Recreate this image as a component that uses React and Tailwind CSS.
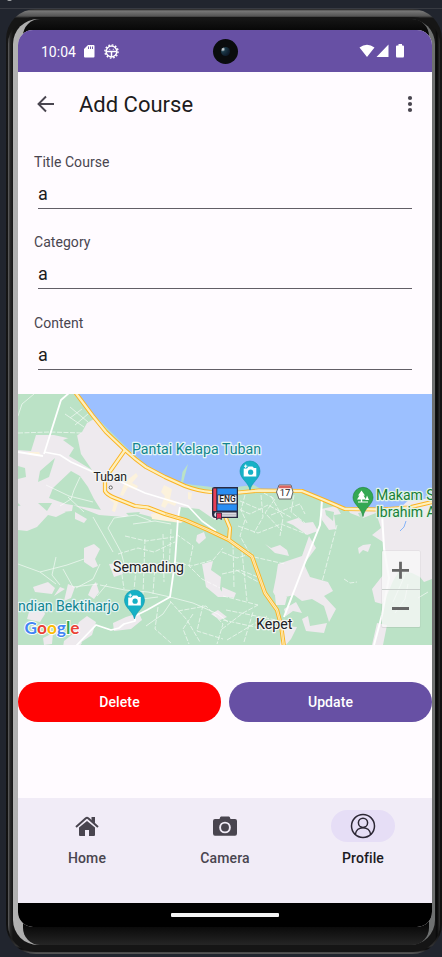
import React from "react";

const GREEN = "#bbe2c6";
const TOWN = "#eeeaee";

const yellowRoads = [
  "M57 -2 L75 22 L88 38 L107 56 Q118 66 128 73 L147 83 L167 92 Q180 97 193 98 L221 98.500 L241 96.500 L284 97 Q304 105 327 115 L364 115.500 L391 113.500 L414 108",
  "M107 56 L93 76 Q87 83 87 88 L87 97 Q89 101 97 104 L117 112 L130 113.500 L147 120 L167 126 L190 136 L211 146 L234 162.500 L247 199 L259 216 L263 231 L266 253",
  "M203 98 L207 122 L212 134 L211 146",
];

const whiteRoads = [
  ["M51 -1 L43 6 L26 60", 1.8],
  ["M0 58 L25 62", 1.8],
  ["M26 58 L42 61 L53 68 L73 77 L103 88 L127 99 L170 112 L184 127 L198 137", 1.6],
  ["M162 113 L160 124 L157 168 L152 203 L129 216 L117 222 L117 227 L106 230 L101 234 L93 236 L78 231 L58 252", 1.8],
  ["M304 106 L303 121 L302 131 L286 171 L266 223", 2],
  ["M364 119 L366 154 L371 184 L367 205 L364 221 L356 251", 2],
];

const laneRoads = [
  "M75 123 L95 158", "M82 191 L107 196 L130 198 L152 203 L175 209 L200 220 L210 228",
  "M107 173 L103 158 L90 134 L96 124 L118 121 L133 127", "M115 130 L137 127 L153 130",
  "M103 174 L106 195 M118 175 L116 196 M127 145 L125 200 M137 170 L135 200 M145 140 L146 188 M153 135 L151 175",
  "M100 160 L120 154 L136 158 L157 148", "M107 142 L128 147 L156 143",
  "M158 140 L175 152 L171 172 L184 185 L202 194", "M157 168 L173 172 L195 166 L205 154",
  "M152 207 L169 226 L182 248 M160 217 L188 212 L205 230 L199 250", "M140 213 L137 235 L153 249",
  "M175 220 L165 235 L171 250 M185 211 L179 237 L205 245", "M204 180 L222 176 L240 183",
  "M204 158 L219 164 L235 159 M215 149 L216 193 M224 158 L229 207 M205 202 L240 211 M208 216 L258 226 M205 226 L251 236",
  "M218 176 L244 190 M204 235 L225 219 L240 211 M209 246 L249 222 M226 248 L235 218",
  "M227 126 L222 142 L232 160 M236 163 L267 170", "M227 101 L223 116 L229 129 M243 101 L245 123 L236 139 M253 102 L265 124 L262 142 M276 101 L273 118 L287 129",
  "M216 113 L232 120 L250 111 L274 124 M220 132 L240 139 L263 130 L288 140", "M240 96 L257 105 L247 119 L264 137 M222 107 L243 116 M253 121 L282 110 L287 120",
  "M319 131 L304 188 M326 185 L332 189 L339 188",
  "M0 39 L32 38 L64 39", "M0 22 L4 10 L16 0 M52 13 L70 28 M47 20 L66 33 M64 15 L52 24 M70 20 L57 31",
  "M28 91 L51 102 L75 108 M62 83 L56 96 L53 105 L42 112 M50 103 L66 118",
  "M0 170 L22 178 L38 190 M38 163 L34 181 L42 191 M22 178 L49 171 L66 165", "M45 175 L55 193 L80 190 M58 194 L75 185 L82 170",
  "M375 208 L383 190 L388 178 M377 219 L387 205 L390 190 M400 204 L410 198",
  "M110 216 L124 205 L140 203 M89 190 L79 202 M128 232 L145 220 L153 208",
];

const cream = [
  "M107 88 l11 -9 2 3 -6 7 6 3 -2 4 -8 -3 -5 9 -3 -1z", "M146 91 l8 4 -2 10 7 3 -2 4 -7 -3 -3 5 -4 -2 4 -10 -4 -4z",
  "M170 98 l4 1 -1 7 -3 -1z", "M10 58 h11 l2 4 -12 -1z", "M93 101 l8 5 -4 12 -3 -1 2 -8 -5 -4z",
  "M133 120 l14 -2 20 8 -4 3 -29 -4z",
];

const townPatches = [
  "M0 56 L13 57 L18 41 L36 41 L54 45 L64 38 L69 29 L76 25 L107 55 L132 75 L167 92 L193 97 L205 119 L197 126 L181 115 L162 113 L159 125 L145 126 L119 119 L106 123 L81 121 L55 111 L54 117 L33 119 L20 110 L5 114 L0 109Z",
  "M0 112 L27 107 L48 118 L38 123 L30 121 L19 133 L9 137 L0 136Z",
  "M66 154 L76 150 L82 155 L77 165 L80 172 L75 174 L66 168Z M91 170 L101 169 L105 180 L96 183Z",
  "M74 192 L78 188 L81 198 L76 205 L70 201Z M50 190 L57 193 L53 204 L46 207Z M42 193 L47 195 L36 202Z",
  "M15 193 L30 188 L37 194 L34 200 L17 198Z M11 218 L24 210 L27 220 L22 228 L9 225Z",
  "M61 228 L69 222 L78 228 L74 241 L62 249 L55 242Z M95 229 L108 223 L121 219 L124 226 L113 235 L96 237Z",
  "M46 247 L56 239 L64 249 L61 253 L45 253Z M25 244 L35 239 L34 250 L26 251Z",
  "M179 141 L186 138 L188 144 L181 150 L178 147Z M184 170 L195 167 L193 176 L203 183 L202 195 L208 203 L200 203 L188 193Z",
  "M193 220 L200 216 L209 223 L202 226Z M204 193 L218 199 L216 204 L204 202Z",
  "M268 128 L280 124 L286 129 L295 128 L300 137 L289 141 L275 131Z M303 115 L318 112 L323 120 L316 121 L318 135 L311 136 L304 126Z",
  "M247 150 L253 154 L262 151 L269 156 L271 162 L257 159Z M260 170 L284 162 L291 142 L298 154 L286 170 L292 183 L310 188 L315 197 L306 202 L318 215 L311 228 L306 212 L294 205 L284 207 L276 201 L259 205 L255 198 L258 183Z",
  "M257 202 L269 203 L267 211 L258 211Z M266 215 L278 208 L284 219 L275 217 L268 222Z M284 225 L290 222 L292 232 L309 229 L306 239 L288 237Z M265 232 L279 233 L273 245 L267 252 L262 251Z",
  "M340 154 L345 151 L353 150 L350 158 L345 156 L341 160Z M358 119 L414 113 L414 185 L406 188 L402 183 L394 179 L381 177 L375 187 L369 201 L364 210 L357 208 L354 195 L365 181 L365 148 L354 141 L363 134Z",
  "M330 115 L414 110 L414 120 L358 119 L345 124 L332 119Z M359 229 L369 231 L365 251 L354 251Z",
  "M382 112 L390 106 L414 101 L414 116 L382 117Z",
  "M57 118 L69 125 L66 129 L57 125Z",
];

const innerGreen = [
  "M22 77 L37 64 L31 83 L20 88Z M45 46 L59 41 L63 60 L74 76 L61 68 L51 62 L56 54Z",
  "M53 77 L62 82 L70 93 L76 105 L83 116 L66 113 L48 110 L31 104 L35 94Z",
  "M0 72 L7 74 L8 83 L0 85Z M20 109 L34 109 L29 117Z M108 119 L122 118 L116 127Z",
  "M307 116 L316 118 L315 127 L308 121Z M340 119 L346 118 L344 127Z",
];

function CameraPin({ x, y }) {
  return (
    <g transform={`translate(${x} ${y})`}>
      <path d="M0 29 C-1.500 21 -10 18 -10 10 A10 10 0 0 1 10 10 C10 18 1.500 21 0 29Z" fill="#16b1c6" stroke="#0c94a9" strokeWidth=".6" />
      <path d="M-6.300 15.500 V7.500 H-3 L-1.500 5.500 H2.500 L4 7 H6.300 V15.500Z" fill="#fff" />
      <circle cx=".6" cy="11.200" r="2.600" fill="#16b1c6" />
      <path d="M-4.300 3.500 V7 M-6 5.200 H-2.600" stroke="#fff" />
    </g>
  );
}

function MapView() {
  return (
    <svg className="block h-[251px] w-[414px]" viewBox="0 0 414 251">
      <rect width="414" height="251" fill={GREEN} />
      {townPatches.map((d) => <path key={d} d={d} fill={TOWN} />)}
      {innerGreen.map((d) => <path key={d} d={d} fill={GREEN} />)}
      <path d="M60 0 H414 V103 L402 106 L392 105 L384 112 L364 114 L327 113 L300 102 L284 95.500 L243 95 L236 91 L222 92.500 L212 95 L198 94 L190 92.500 L176 91 L163 89 L150 83 L128 71 L110 55 L76 21Z" fill="#9cc0ff" />
      <path d="M163 88 L164.500 78 L170 70 L166.500 83 L165 89Z" fill={GREEN} />
      {cream.map((d) => <path key={d} d={d} fill="#fcf2dc" />)}
      <g fill="none" stroke="#fff" strokeLinejoin="round" opacity=".75">
        {laneRoads.map((d, i) => <path key={d} d={d} strokeWidth=".8" strokeDasharray={i > 3 && i < 21 ? "5 1.500" : undefined} />)}
      </g>
      <g fill="none" stroke="#fff" strokeLinejoin="round">
        {whiteRoads.map(([d, w]) => <path key={d} d={d} strokeWidth={w} />)}
      </g>
      <path d="M388 127 L386 133 L382 137" fill="none" stroke="#86b4f8" />
      <g fill="none" strokeLinejoin="round">
        {yellowRoads.map((d) => <path key={d} d={d} stroke="#fbb321" strokeWidth="4.200" />)}
        {yellowRoads.map((d) => <path key={d} d={d} stroke="#fef0bd" strokeWidth="2.300" />)}
      </g>
      <path d="M147 120 L167 126 L190 136 L211 146 L234 162.500 L247 199 L259 216 L263 231 L266 253" fill="none" stroke="#fbc65a" strokeWidth=".6" />

      <CameraPin x="232" y="67" />
      <CameraPin x="116.500" y="196" />

      <g transform="translate(345 93.500)">
        <path d="M0 29 C-1.500 20 -10 17 -10 9.800 A10 10 0 0 1 10 9.800 C10 17 1.500 20 0 29Z" fill="#34a853" stroke="#188038" strokeWidth=".6" />
        <path d="M-1.500 3 L2 8 H.5 L3 12 H-.8 V14 H5 V15 H-5 V14 H-2.200 V12 H-6 L-3.500 8 H-5Z M4 8 L6 12.500 H2.500Z" fill="#fff" />
      </g>

      <g transform="translate(267 98)">
        <path d="M-6 -7 H6 L8 0 L6 7 H-6 L-8.500 0Z" fill="#fff" stroke="#666" strokeWidth="1" />
        <path d="M-5.500 -6.500 H5.500 L6.500 -3.800 H-6.500Z" fill="#d96560" />
        <text x="0" y="4" textAnchor="middle" fontSize="9.500" fill="#222">17</text>
      </g>

      <circle cx="92.700" cy="93.500" r="1.600" fill="#fff" stroke="#555" strokeWidth=".9" />

      <g transform="translate(194 93)">
        <path d="M0 2 Q0 0 2.500 0 H26 V23 L26 31 H3 Q0 31 0 27Z" fill="#282a42" />
        <rect x="1.300" y="1.500" width="3" height="22.500" fill="#e84055" />
        <rect x="5.300" y="1.500" width="19.500" height="22" fill="#298df2" />
        <rect x="5.500" y="7.500" width="19.500" height="9.800" fill="#282a42" />
        <rect x="6.200" y="8.300" width="18.300" height="8.200" fill="#f4f3f7" />
        <text x="15.400" y="15.400" textAnchor="middle" fontSize="8.500" fontWeight="500" textLength="16.500" lengthAdjust="spacingAndGlyphs" fill="#222">ENG</text>
        <path d="M3 25.500 H24.500 V29.800 H3 Q1.500 27.500 3 25.500Z" fill="#dedee5" />
        <path d="M5 27.800 H24" stroke="#9c9ca6" strokeWidth=".7" />
        <path d="M4.500 26 H9.500 V32.500 L7 31 L4.500 32.500Z" fill="#e62e57" stroke="#282a42" strokeWidth=".8" />
      </g>

      <g strokeWidth="2.500" strokeLinejoin="round" paintOrder="stroke">
        <g fill="#12858f" stroke="#e5f5f6">
          <text x="114" y="60" fontSize="14.500" textLength="129" lengthAdjust="spacingAndGlyphs">Pantai Kelapa Tuban</text>
          <text x="0" y="217" fontSize="14.500" textLength="101" lengthAdjust="spacingAndGlyphs">ndian Bektiharjo</text>
        </g>
        <g fill="#188038" stroke="#e2f4e8" fontSize="14">
          <text x="358" y="106">Makam S</text>
          <text x="358" y="123">Ibrahim A</text>
        </g>
        <g fill="#202124" stroke="#f4f6f4">
          <text x="75.500" y="86.500" fontSize="13" textLength="33.500" lengthAdjust="spacingAndGlyphs">Tuban</text>
          <text x="95" y="178" fontSize="14.500" textLength="71" lengthAdjust="spacingAndGlyphs">Semanding</text>
          <text x="238" y="235" fontSize="14.500" textLength="36.500" lengthAdjust="spacingAndGlyphs">Kepet</text>
        </g>
      </g>

      <g fontSize="17.500" fontWeight="700" stroke="#fff" strokeWidth="1.800" paintOrder="stroke">
        <text x="6.500" y="240" textLength="55" lengthAdjust="spacingAndGlyphs" fontFamily="Lato, sans-serif">
          <tspan fill="#4285f4">G</tspan><tspan fill="#ea4335">o</tspan><tspan fill="#fbbc04">o</tspan><tspan fill="#4285f4">g</tspan><tspan fill="#34a853">l</tspan><tspan fill="#ea4335">e</tspan>
        </text>
      </g>

      <rect x="363.500" y="156.500" width="39" height="77.500" rx="1.500" fill="#777" opacity=".15" />
      <rect x="364" y="157" width="38" height="76" rx="1" fill="#fff" opacity=".74" />
      <path d="M364 195.500 H402" stroke="#c9cfcc" />
      <path d="M374 176.300 H391 M382.500 167.800 V184.800 M374 214.500 H391" stroke="#666" strokeWidth="2.800" />
    </svg>
  );
}

function StatusBar() {
  return (
    <div className="flex h-[42px] items-center bg-[#6750a4] pl-[23px] pr-[27px] text-white">
      <span className="w-[35px] whitespace-nowrap pt-px text-[14px] leading-none">10:04</span>
      <svg className="ml-[8px] h-[13px] w-[11px]" viewBox="0 0 11 13">
        <path d="M4 0 H9.500 Q10.500 0 10.500 1 V11.500 Q10.500 12.500 9.500 12.500 H1 Q0 12.500 0 11.500 V4Z" fill="#fff" />
        <path d="M4.500 1.500 V4 M6.500 1.500 V4 M8.500 1.500 V4" stroke="#6750a4" strokeWidth=".9" />
      </svg>
      <svg className="ml-[9px] h-[15px] w-[15px]" viewBox="0 0 15 15" fill="none" stroke="#fff">
        <circle cx="7.500" cy="7.500" r="5.400" strokeWidth="1.500" />
        <circle cx="7.500" cy="7.500" r="6.600" strokeWidth="1.400" strokeDasharray="1.700 1.756" />
        <path d="M2.500 7.500 H12.500 M7.500 7.500 V13" strokeWidth="1.500" />
        <path d="M5.200 5.300 H6.200 M8.800 5.300 H9.800" />
      </svg>
      <span className="ml-[94px] block h-[25px] w-[25px] shrink-0 rounded-full bg-[#0a0c0e] p-[8px]">
        <span className="block h-[9px] w-[9px] rounded-full bg-[radial-gradient(circle_at_20%_25%,#bdc7cd_0_8%,#1c3b4a_25%,#102030_65%,#08141f)]" />
      </span>
      <svg className="ml-auto h-[14px] w-[46px] shrink-0" viewBox="0 0 46 14" fill="#fff">
        <path d="M.5 3.500 Q8 -2 15.500 3.500 L8 13Z M29.500 .5 V13 H17.500Z M38 1.500 H39.500 V0 H43 V1.500 H44 Q45 1.500 45 2.500 V12 Q45 13.500 44 13.500 H38 Q37 13.500 37 12 V2.500 Q37 1.500 38 1.500Z" />
      </svg>
    </div>
  );
}

function Field({ label, className }) {
  return (
    <div className={className}>
      <div className="h-[21px] text-[14px] leading-[20px] tracking-[0.05px] text-[#49454f]">{label}</div>
      <div className="mx-1 h-[36px] border-b border-[#625e66] pt-[8px] text-[18px] leading-[25px] text-[#1d1b20]">a</div>
    </div>
  );
}

function NavItem({ label, active, children }) {
  return (
    <div className="flex flex-1 flex-col items-center pt-[12px]">
      <div className={active ? "flex h-[32px] w-[64px] items-center justify-center rounded-full bg-[#e6def6]" : "flex h-[32px] w-[64px] items-center justify-center"}>
        {children}
      </div>
      <div className={active ? "mt-[6px] text-[14px] font-medium leading-[20px] tracking-[0.1px] text-[#1c1b1f]" : "mt-[6px] text-[14px] font-medium leading-[20px] tracking-[0.15px] text-[#49454f]"}>{label}</div>
    </div>
  );
}

function NavBar() {
  return (
    <div className="flex h-[105px] bg-[#f1ecf7]">
      <NavItem label="Home">
        <svg className="h-[24px] w-[24px]" viewBox="0 0 24 24">
          <path d="M4 13.500 L12 7 L20 13.500 V21 Q20 22 19 22 H14 V16 H10 V22 H5 Q4 22 4 21Z" fill="#49454f" />
          <path d="M1 13 L10.800 4.300 Q12 3.300 13.200 4.300 L23 13" fill="none" stroke="#49454f" strokeWidth="2" />
          <path d="M16.500 3 H20 V9.500 L16.500 6.500Z" fill="#49454f" />
        </svg>
      </NavItem>
      <NavItem label="Camera">
        <svg className="h-[24px] w-[24px]" viewBox="0 0 24 24">
          <path d="M8 2.500 H16 Q17 2.500 17.500 5 H22 Q24 5 24 7 V19.500 Q24 21.800 22 21.800 H2 Q0 21.800 0 19.500 V7 Q0 5 2 5 H6.500 Q7 2.500 8 2.500Z" fill="#49454f" />
          <circle cx="12" cy="13.500" r="4.900" fill="none" stroke="#f1ecf7" strokeWidth="1.900" />
        </svg>
      </NavItem>
      <NavItem label="Profile" active>
        <svg className="h-[26px] w-[26px]" viewBox="0 0 26 26" fill="none" stroke="#2c2735" strokeWidth="1.500">
          <circle cx="13" cy="13" r="11.500" />
          <circle cx="13" cy="9.800" r="4.600" />
          <path d="M5.300 21.700 C6.300 12.300 19.700 12.300 20.700 21.700" />
        </svg>
      </NavItem>
    </div>
  );
}

export default function App() {
  return (
    <div className="h-[957px] w-[442px] overflow-hidden bg-[#21252e] font-['Roboto',sans-serif]">
      <div className="flex h-[9px] items-end border-b border-[#383b42]">
        <div className="mb-[7px] ml-[7px] h-[2px] w-[5px] rounded-b-full bg-[#a5a8aa]" />
      </div>
      <div className="ml-[6px] h-[945px] w-[436px] rounded-[30px] bg-[linear-gradient(to_bottom,#1b1b1b_0,#777_2px,#555_7px,#161616_9px,#111_925px,#333_937px,#090909_940px,#555_944px)] px-[2px] pb-[2px] pt-[8px]">
        <div className="h-[935px] rounded-[27px] bg-[linear-gradient(to_right,#666_0,#292929_2px,#151515_5px,#151515_427px,#080808_429px,#333_432px)] px-[5px] pt-[2px]">
          <div className="h-[926px] rounded-[25px] bg-[linear-gradient(to_right,#b2b2b2_0,#adadad_12px,#777_200px,#6e7070_100%)] pl-[10px] pr-[6px]">
            <div className="h-[926px] rounded-[17px] bg-[linear-gradient(to_bottom,#151515_0,#080808_11px,#080808_906px,#252525_926px)] pt-[11px]">
              <div className="ml-[-5px] h-[897px] w-[414px] overflow-hidden rounded-[15px] bg-[#fffbff]">
                <StatusBar />
                <div className="flex h-[64px] items-center pl-[19px] pr-[18px] text-[#1d1b20]">
                  <svg className="h-[18px] w-[18px]" viewBox="0 0 18 18" fill="none" stroke="#49454f" strokeWidth="1.900"><path d="M17 9 H2 M9 1.500 L1.500 9 L9 16.500" /></svg>
                  <h1 className="ml-[24px] pt-[2px] text-[22px] font-normal leading-[28px]">Add Course</h1>
                  <svg className="ml-auto h-[18px] w-[8px]" viewBox="0 0 8 18" fill="#49454f"><circle cx="4" cy="3" r="2.100" /><circle cx="4" cy="9" r="2.100" /><circle cx="4" cy="15" r="2.100" /></svg>
                </div>
                <div className="h-[258px] px-4 pt-[16px]">
                  <Field label="Title Course" className="h-[80px]" />
                  <Field label="Category" className="h-[81px]" />
                  <Field label="Content" className="h-[81px]" />
                </div>
                <MapView />
                <div className="flex h-[153px] gap-[8px] pt-[37px] text-[14px] font-medium text-white">
                  <button className="h-[40px] w-[203px] rounded-full bg-[#ff0000] tracking-[0.1px]">Delete</button>
                  <button className="h-[40px] w-[203px] rounded-full bg-[#6750a4] tracking-[0.1px]">Update</button>
                </div>
                <NavBar />
                <div className="flex h-[24px] justify-center bg-black pt-[10px]">
                  <div className="h-[4px] w-[108px] rounded-[1px] bg-[#f4f4f4]" />
                </div>
              </div>
            </div>
          </div>
        </div>
      </div>
    </div>
  );
}
